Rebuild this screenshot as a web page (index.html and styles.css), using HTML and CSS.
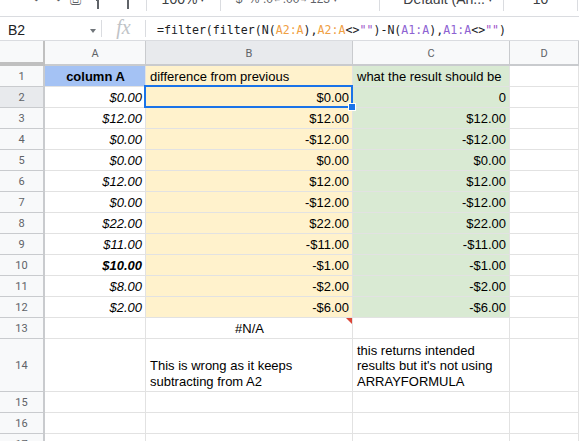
FILE: index.html
```html
<!DOCTYPE html>
<html lang="en">
<head>
    <meta charset="UTF-8">
    <title>Sheet</title>
    <link rel="stylesheet" href="styles.css">
</head>
<body>
<div class="toolbar">
    <div class="tool-row">
        <span class="tool w18">&#8630;</span>
        <span class="tool w16">&#8631;</span>
        <span class="tool w22">&#9113;</span>
        <svg class="tool w24" width="16" height="24" viewBox="0 0 16 24"><path d="M2 4h10v6H2zM7 10v3h1v9" fill="none" stroke="#5f6368" stroke-width="2"/></svg>
        <span class="tool w37"><span class="tick"></span></span>
        <span class="bar"></span>
        <span class="tool t-zoom">100% <small>&#9662;</small></span>
        <span class="bar"></span>
        <span class="tool t-fmt f-dollar">$</span>
        <span class="tool t-fmt f-pct">%</span>
        <span class="tool t-fmt f-dec">.0<small>&larr;</small></span>
        <span class="tool t-fmt f-inc">.00<small>&rarr;</small></span>
        <span class="tool t-num">123 <small>&#9662;</small></span>
        <span class="bar"></span>
        <span class="tool t-font">Default (Ari... <small>&#9662;</small></span>
        <span class="bar"></span>
        <span class="tool t-size">10</span>
        <span class="bar"></span>
    </div>
</div>

<div class="formula-bar">
    <div class="name-box">B2<span class="caret"></span></div>
    <div class="sep"></div>
    <div class="fx">fx</div>
    <div class="sep"></div>
    <div class="formula">=filter(filter(N(<span class="r1">A2:A</span>),<span class="r1">A2:A</span>&lt;&gt;<span class="str">""</span>)-N(<span class="r2">A1:A</span>),<span class="r2">A1:A</span>&lt;&gt;<span class="str">""</span>)</div>
</div>

<div class="grid">
    <div class="corner"></div>
    <div class="col-head">A</div>
    <div class="col-head active">B</div>
    <div class="col-head">C</div>
    <div class="col-head">D</div>

    <div class="row-head">1</div>
    <div class="cell blue bold center">column A</div>
    <div class="cell yellow">difference from previous</div>
    <div class="cell green">what the result should be</div>
    <div class="cell"></div>

    <div class="row-head active">2</div>
    <div class="cell num ital">$0.00</div>
    <div class="cell yellow num selected">$0.00<span class="handle"></span></div>
    <div class="cell green num">0</div>
    <div class="cell"></div>

    <div class="row-head">3</div>
    <div class="cell num ital">$12.00</div>
    <div class="cell yellow num">$12.00</div>
    <div class="cell green num">$12.00</div>
    <div class="cell"></div>

    <div class="row-head">4</div>
    <div class="cell num ital">$0.00</div>
    <div class="cell yellow num">-$12.00</div>
    <div class="cell green num">-$12.00</div>
    <div class="cell"></div>

    <div class="row-head">5</div>
    <div class="cell num ital">$0.00</div>
    <div class="cell yellow num">$0.00</div>
    <div class="cell green num">$0.00</div>
    <div class="cell"></div>

    <div class="row-head">6</div>
    <div class="cell num ital">$12.00</div>
    <div class="cell yellow num">$12.00</div>
    <div class="cell green num">$12.00</div>
    <div class="cell"></div>

    <div class="row-head">7</div>
    <div class="cell num ital">$0.00</div>
    <div class="cell yellow num">-$12.00</div>
    <div class="cell green num">-$12.00</div>
    <div class="cell"></div>

    <div class="row-head">8</div>
    <div class="cell num ital">$22.00</div>
    <div class="cell yellow num">$22.00</div>
    <div class="cell green num">$22.00</div>
    <div class="cell"></div>

    <div class="row-head">9</div>
    <div class="cell num ital">$11.00</div>
    <div class="cell yellow num">-$11.00</div>
    <div class="cell green num">-$11.00</div>
    <div class="cell"></div>

    <div class="row-head">10</div>
    <div class="cell num ital bold">$10.00</div>
    <div class="cell yellow num">-$1.00</div>
    <div class="cell green num">-$1.00</div>
    <div class="cell"></div>

    <div class="row-head">11</div>
    <div class="cell num ital">$8.00</div>
    <div class="cell yellow num">-$2.00</div>
    <div class="cell green num">-$2.00</div>
    <div class="cell"></div>

    <div class="row-head">12</div>
    <div class="cell num ital">$2.00</div>
    <div class="cell yellow num">-$6.00</div>
    <div class="cell green num">-$6.00</div>
    <div class="cell"></div>

    <div class="row-head">13</div>
    <div class="cell"></div>
    <div class="cell center error">#N/A</div>
    <div class="cell"></div>
    <div class="cell"></div>

    <div class="row-head">14</div>
    <div class="cell"></div>
    <div class="cell wrap">This is wrong as it keeps subtracting from A2</div>
    <div class="cell wrap">this returns intended results but it's not using ARRAYFORMULA</div>
    <div class="cell"></div>

    <div class="row-head">15</div>
    <div class="cell"></div>
    <div class="cell"></div>
    <div class="cell"></div>
    <div class="cell"></div>

    <div class="row-head">16</div>
    <div class="cell"></div>
    <div class="cell"></div>
    <div class="cell"></div>
    <div class="cell"></div>

    <div class="row-head">17</div>
    <div class="cell"></div>
    <div class="cell"></div>
    <div class="cell"></div>
    <div class="cell"></div>
</div>
</body>
</html>
```

FILE: styles.css
```css
body{
    margin: 0;
    width: 579px;
    height: 441px;
    overflow: hidden;
    background: #ffffff;
    font-family: "Liberation Sans", Arial, sans-serif;
}

/* toolbar, only its bottom edge is visible */
.toolbar{
    height: 16px;
    border-bottom: 1px solid #dadce0;
    overflow: hidden;
}
.tool-row{
    display: flex;
    align-items: center;
    height: 24px;
    margin-top: -13px;
    padding-left: 30px;
    color: #5f6368;
    font-size: 14px;
}
.tool{
    display: flex;
    align-items: center;
    justify-content: center;
    flex: none;
    white-space: nowrap;
}
.tool small{
    font-size: 9px;
    margin-left: 3px;
}
.w16{ width: 16px; }
.w18{ width: 18px; }
.w22{ width: 22px; }
.w24{ width: 24px; }
.w37{ width: 36px; }
.tick{
    width: 2px;
    height: 20px;
    background: #5f6368;
}
.bar{
    flex: none;
    width: 1px;
    height: 24px;
    background: #dadce0;
}
.t-zoom{
    width: 73px;
    color: #3c4043;
}
.t-fmt{
    font-size: 12px;
}
.t-fmt small{
    font-size: 8px;
    margin-left: 0;
}
.f-dollar{
    margin-left: 10px;
    width: 16px;
}
.f-pct{ width: 14px; }
.f-dec{ width: 20px; margin-left: 1px; }
.f-inc{ width: 24px; margin-left: 1px; }
.t-num{
    width: 34px;
    font-size: 12px;
    margin-right: 38px;
}
.t-font{
    width: 113px;
    color: #3c4043;
    justify-content: flex-end;
    padding-right: 10px;
}
.t-size{
    width: 73px;
    color: #3c4043;
}

/* formula bar */
.formula-bar{
    display: flex;
    align-items: center;
    height: 23px;
    border-bottom: 1px solid #dadce0;
}
.name-box{
    position: relative;
    width: 93px;
    padding-left: 8px;
    font-size: 14px;
    color: #202124;
    padding-top: 2px;
}
.caret{
    position: absolute;
    right: 5px;
    top: 9px;
    border-left: 3px solid transparent;
    border-right: 3px solid transparent;
    border-top: 4px solid #70757a;
}
.sep{
    width: 1px;
    height: 17px;
    background: #dadce0;
}
.fx{
    width: 43px;
    text-align: center;
    font-family: "Liberation Serif", serif;
    font-style: italic;
    font-size: 20px;
    color: #c0c3c7;
    margin-top: -2px;
}
.formula{
    padding-left: 11px;
    padding-top: 2px;
    font-family: "DejaVu Sans Mono", monospace;
    font-size: 11.6px;
    color: #202124;
    white-space: nowrap;
}
.r1{ color: #f0a045; }
.r2{ color: #8d62d2; }
.str{ color: #9c50c8; }

/* grid */
.grid{
    display: grid;
    grid-template-columns: 45px 101px 207px 157px 1fr;
    grid-template-rows: 25px repeat(13, 21px) 53px 21px 21px 21px;
}
.corner{
    background: #f8f9fa;
    border-right: 4px solid #c0c0c0;
    border-bottom: 4px solid #c0c0c0;
    margin-right: -2px;
}
.col-head{
    display: flex;
    align-items: center;
    justify-content: center;
    background: #f8f9fa;
    border-right: 1px solid #c9cbce;
    border-bottom: 2px solid #c9cbce;
    color: #5f6368;
    font-family: Roboto, "Liberation Sans", sans-serif;
    font-size: 11px;
    padding-top: 1px;
}
.col-head.active{
    background: #e8eaed;
}
.row-head{
    display: flex;
    align-items: center;
    justify-content: center;
    background: #f8f9fa;
    border-right: 2px solid #c9cbce;
    border-bottom: 1px solid #c9cbce;
    color: #5f6368;
    font-family: Roboto, "Liberation Sans", sans-serif;
    font-size: 11px;
}
.row-head.active{
    background: #e8eaed;
}
.cell{
    position: relative;
    display: flex;
    align-items: flex-end;
    padding: 0 3px 2px 4px;
    border-right: 1px solid #e2e2e2;
    border-bottom: 1px solid #e2e2e2;
    font-size: 13px;
    line-height: 15.5px;
    color: #000000;
    white-space: nowrap;
    overflow: visible;
}
.num{
    justify-content: flex-end;
}
.center{
    justify-content: center;
}
.ital{
    font-style: italic;
}
.bold{
    font-weight: bold;
}
.wrap{
    white-space: normal;
}
.blue{ background: #a4c2f4; }
.yellow{ background: #fff2cc; }
.green{ background: #d9ead3; }

.selected::after{
    content: "";
    position: absolute;
    left: -2px;
    top: -2px;
    right: -1px;
    bottom: -1px;
    border: 2px solid #1a73e8;
}
.handle{
    position: absolute;
    right: -4px;
    bottom: -4px;
    width: 6px;
    height: 6px;
    background: #1a73e8;
    border: 1px solid #ffffff;
    z-index: 2;
}
.error::after{
    content: "";
    position: absolute;
    top: 0;
    right: 0;
    border-top: 6px solid #db4437;
    border-left: 6px solid transparent;
}
```
